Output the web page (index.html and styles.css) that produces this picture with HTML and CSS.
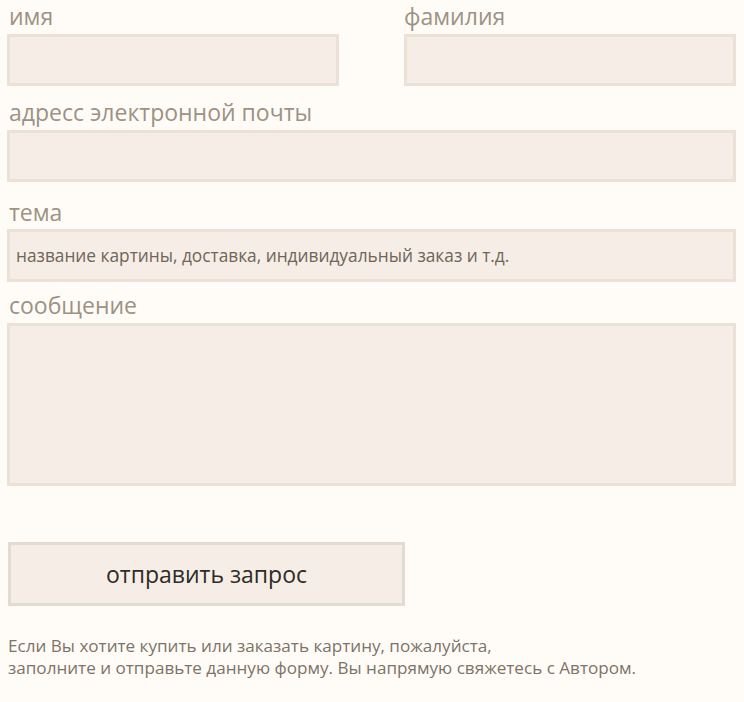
FILE: index.html
```html
<!DOCTYPE html>
<html lang="ru">
<head>
<meta charset="utf-8">
<link rel="stylesheet" href="styles.css">
</head>
<body>
<form class="form">
  <div class="row">
    <div class="field">
      <label class="label label-top">имя</label>
      <input class="input" type="text">
    </div>
    <div class="field">
      <label class="label label-top label-right">фамилия</label>
      <input class="input" type="text">
    </div>
  </div>
  <div class="field">
    <label class="label label-email">адресс электронной почты</label>
    <input class="input" type="text">
  </div>
  <div class="field">
    <label class="label label-theme">тема</label>
    <input class="input input-theme" type="text" placeholder="название картины, доставка, индивидуальный заказ и т.д.">
  </div>
  <div class="field">
    <label class="label label-msg">сообщение</label>
    <textarea class="input textarea"></textarea>
  </div>
  <button class="button" type="button">отправить запрос</button>
  <p class="note">Если Вы хотите купить или заказать картину, пожалуйста,<br>заполните и отправьте данную форму. Вы напрямую свяжетесь с Автором.</p>
</form>
</body>
</html>
```
FILE: styles.css
```css
html, body {
  margin: 0;
  padding: 0;
  background: #fffcf8;
}
body {
  font-family: "Open Sans", "Noto Sans", sans-serif;
}
.form {
  padding: 0 8px 0 7px;
  display: flex;
  flex-direction: column;
}
.row {
  display: grid;
  grid-template-columns: 332px 332px;
  justify-content: space-between;
}
.field {
  display: flex;
  flex-direction: column;
}
.label {
  display: block;
  font-size: 23px;
  line-height: 30px;
  color: #9d9283;
  padding-left: 2px;
  margin-bottom: 3px;
}
.label-top {
  margin-top: 1px;
}
.label-right {
  padding-left: 0;
}
.label-email {
  margin-top: 11px;
}
.label-theme {
  margin-top: 15px;
  margin-bottom: 2px;
}
.label-msg {
  margin-top: 8px;
  margin-bottom: 3px;
}
.input {
  box-sizing: border-box;
  height: 52px;
  background: #f6eee6;
  border: 3px solid #ebe1d6;
  border-radius: 0;
  outline: none;
  font-family: inherit;
  font-size: 17.3px;
  color: #6f6558;
  padding: 0 6px;
  margin: 0;
}
.input-theme {
  height: 53px;
}
.input::placeholder {
  color: #6f6558;
  opacity: 1;
}
.textarea {
  height: 163px;
  resize: none;
}
.button {
  margin-top: 56px;
  width: 397px;
  height: 64px;
  background: #f6eee6;
  border: 3px solid #e3dbd1;
  font-family: inherit;
  font-size: 23px;
  color: #2f2b26;
  padding: 0;
  margin-left: 1px;
}
.note {
  margin: 29px 0 0 1px;
  font-size: 17.1px;
  line-height: 22px;
  color: #7d7366;
}
```
